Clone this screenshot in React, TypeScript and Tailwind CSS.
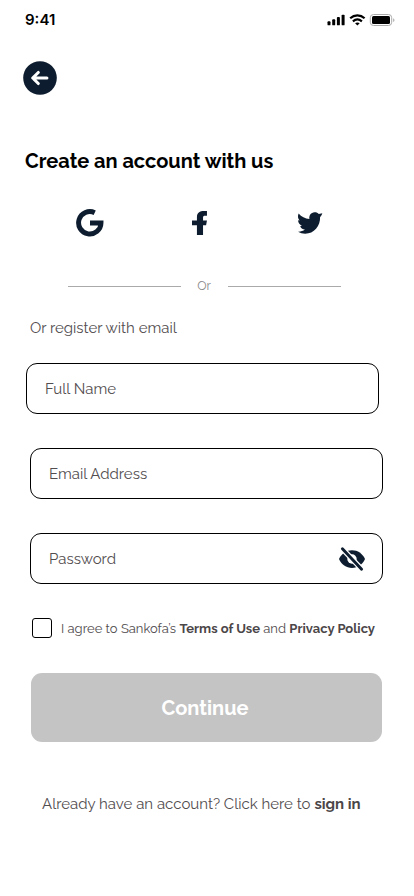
import type { ReactNode } from "react";

function StatusBar() {
  return (
    <div className="flex h-10 items-center justify-between pl-[25px] pr-[19px]">
      <span className="font-['Inter',sans-serif] text-[15px] font-semibold leading-5 text-black">9:41</span>
      <svg width="68" height="14" viewBox="0 0 68 14" fill="#000">
        <rect x="0.5" y="8.3" width="3" height="4" rx="0.9" />
        <rect x="5.2" y="6.3" width="3" height="6" rx="0.9" />
        <rect x="9.9" y="4" width="3" height="8.3" rx="0.9" />
        <rect x="14.6" y="1.7" width="3" height="10.6" rx="0.9" />
        <g fill="none" stroke="#000" strokeWidth="2.2">
          <path d="M23.2 5.3c4.2-3.8 10.2-3.8 14.4 0" />
          <path d="M25.9 8.3c2.7-2.3 6.3-2.3 9 0" />
        </g>
        <path d="M28.1 10.2c1.3-1.1 3.3-1.1 4.6 0l-2.3 2.3z" />
        <rect x="43.3" y="1.5" width="21.4" height="11" rx="3.2" fill="none" stroke="#aaa" />
        <rect x="45" y="3" width="18" height="8" rx="1.5" />
        <path d="M66.2 5.2c1.700.7 1.700 3.200 0 3.900z" fill="#aaa" />
      </svg>
    </div>
  );
}

function EyeOff() {
  return (
    <svg width="28" height="26" viewBox="0 0 28 26" fill="none">
      <path d="M1 13C3.400 7.600 8.200 4.200 14 4.200S24.600 7.600 27 13c-2.400 5.400-7.200 9-13 9S3.400 18.400 1 13z" fill="#0d1c2e" />
      <circle cx="14" cy="13" r="4.700" fill="#fff" />
      <path d="M2.500 .8L25.500 25" stroke="#fff" strokeWidth="5.400" />
      <path d="M4.400 2.800L23.600 23.200" stroke="#0d1c2e" strokeWidth="2.900" strokeLinecap="round" />
    </svg>
  );
}

function Field({ label, shifted, children }: { label: string; shifted?: boolean; children?: ReactNode }) {
  return (
    <div
      className={`flex h-[51px] w-[353px] items-center justify-between rounded-[11px] border border-black pl-[18px] pr-4 ${
        shifted ? "ml-[30px]" : "ml-[26px]"
      }`}
    >
      <span className="text-[15px] leading-5">{label}</span>
      {children}
    </div>
  );
}

export default function App() {
  return (
    <main className="flex h-[896px] w-[414px] flex-col overflow-hidden bg-white font-['Raleway','Lato',sans-serif] text-[#524d4f]">
      <StatusBar />
      <button className="ml-[23px] mt-[21px] size-[34px]" aria-label="Back">
        <svg width="34" height="34" viewBox="0 0 34 34" fill="none">
          <circle cx="17" cy="17" r="16.8" fill="#0d1c2e" />
          <path d="M23.9 17H10M15.3 11.500L9.700 17l5.600 5.500" stroke="#fff" strokeWidth="3.100" strokeLinecap="round" strokeLinejoin="round" />
        </svg>
      </button>
      <h1 className="ml-[25px] mt-[51px] whitespace-nowrap text-[20px] font-bold leading-[30px] text-black">
        Create an account with us
      </h1>
      <div className="mt-[32px] flex h-[30px] items-center pl-[76px] text-[#0d1c2e]">
        <svg width="28" height="28" viewBox="0 0 28 28" fill="none" stroke="currentColor" strokeWidth="4.9">
          <path d="M18.700 3.700A11.200 11.200 0 1 0 25 14H14" />
        </svg>
        <svg className="ml-[88px]" width="15" height="24" viewBox="7 2 10.33 20" fill="currentColor" preserveAspectRatio="none">
          <path d="M10.4 22v-8.200H7V10h3.400V6.900C10.400 3.600 12.300 2 15.300 2h2v3.900h-1.400c-.9 0-1.300.5-1.300 1.500V10h2.700l-.6 3.800h-2.100V22z" />
        </svg>
        <svg className="ml-[90px]" width="26" height="24" viewBox="0 0 26 24" fill="currentColor">
          <path d="M1.600 2.500C4.400 5.800 8 7.600 12.400 7.900C11.900 4.300 14 1.500 17.500 1.200C19.200 1.100 20.700 1.700 21.800 2.900L25.300 2.200C25 3.800 24.200 4.900 23.100 6C23.400 15.200 17 22.700 8.200 22.700C5.600 22.700 3.200 22 1 20.700C3.700 20.800 6.100 20.100 7.900 18.600C5.400 18.300 3.800 16.900 3.200 14.900L5 14.700C2.500 13.700 1.100 11.700 1.100 9.200L2.600 9.600C.8 7.600.5 5 1.600 2.500z" />
        </svg>
      </div>
      <div className="mt-[38px] flex h-5 items-center pl-[68px]">
        <span className="h-px w-[113px] bg-[#aaa]" />
        <span className="w-[47px] pr-px text-center text-[12.5px] leading-5 text-[#8a8a8a]">Or</span>
        <span className="h-px w-[113px] bg-[#aaa]" />
      </div>
      <p className="ml-[30px] mt-[22px] whitespace-nowrap text-[15px] leading-5">Or register with email</p>
      <div className="mt-[25px] flex flex-col gap-[34px]">
        <Field label="Full Name" />
        <Field label="Email Address" shifted />
        <Field label="Password" shifted>
          <EyeOff />
        </Field>
      </div>
      <div className="ml-[32px] mt-[34px] flex h-5 items-center gap-[9px]">
        <span className="size-5 shrink-0 rounded-[3px] border border-black" />
        <p className="mt-px whitespace-nowrap text-[13px] leading-5">
          I agree to Sankofa’s <b className="font-bold text-[#4b4648]">Terms of Use</b> and{" "}
          <b className="font-bold text-[#4b4648]">Privacy Policy</b>
        </p>
      </div>
      <button className="ml-[31px] mt-[35px] h-[69px] w-[351px] rounded-[11px] bg-[#c4c4c4] pr-[3px] text-[20px] font-bold leading-[30px] text-white">
        Continue
      </button>
      <p className="ml-[42px] mt-[52px] whitespace-nowrap text-[15px] leading-5">
        Already have an account? Click here to <b className="font-bold text-[#4b4648]">sign in</b>
      </p>
    </main>
  );
}
